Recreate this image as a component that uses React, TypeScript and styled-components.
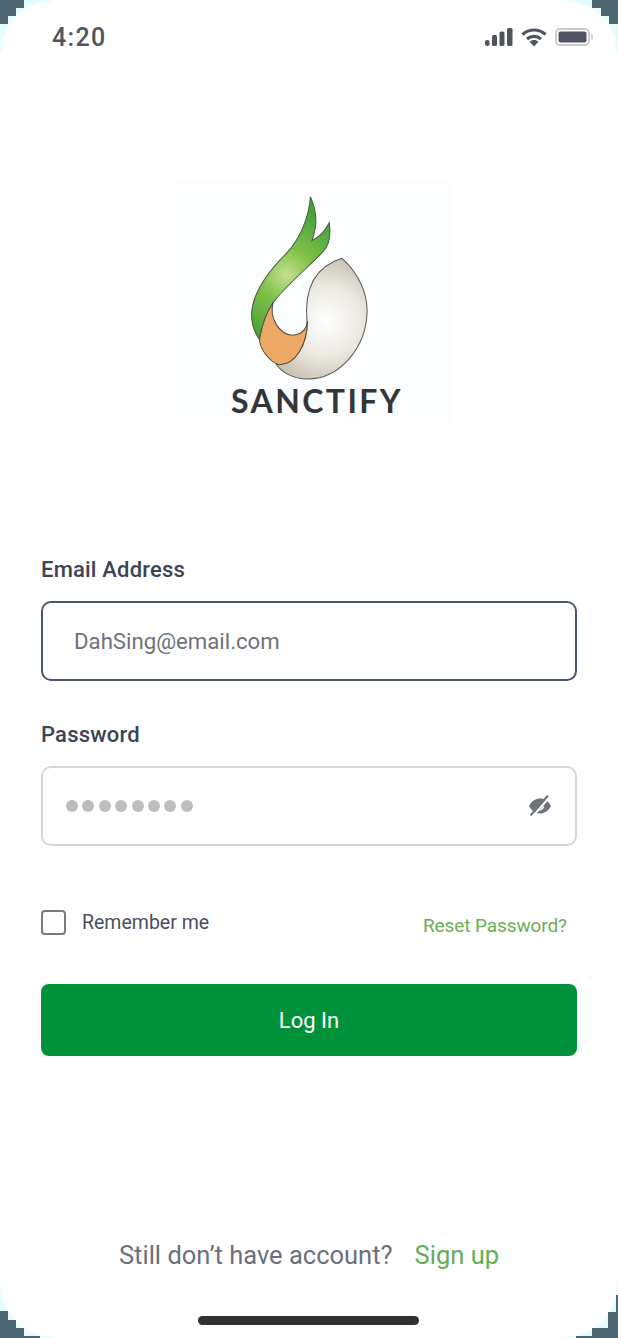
import React from 'react';
import styled, { createGlobalStyle } from 'styled-components';

const GlobalStyle = createGlobalStyle`
  html, body {
    margin: 0;
    padding: 0;
    background: #ffffff;
  }
  * {
    box-sizing: border-box;
  }
`;

export default function App() {
  return (
    <Screen>
      <GlobalStyle />
      <CornerMark $side="top-left" />
      <CornerMark $side="top-right" />
      <CornerMark $side="bottom-left" />
      <CornerMark $side="bottom-right" />

      <StatusBar>
        <Time>4:20</Time>
        <StatusIcons>
          <svg width="28" height="18" viewBox="0 0 28 18" fill="#4e5461">
            <rect x="0" y="12" width="4.5" height="6" rx="2" />
            <rect x="7" y="7" width="5" height="11" rx="1.5" />
            <rect x="14.5" y="3.5" width="5" height="14.5" rx="1.5" />
            <rect x="22" y="0" width="5.5" height="18" rx="1.5" />
          </svg>
          <svg width="26" height="19" viewBox="0 0 26 19" fill="none" stroke="#4e5461" strokeWidth="3.2">
            <path d="M1.5 6.5C8 0.5 18 0.5 24.5 6.5" />
            <path d="M6 11C10 7.5 16 7.5 20 11" />
            <path d="M8.5 13.5L13 18.5L17.5 13.5C15 11.4 11 11.4 8.5 13.5Z" fill="#4e5461" stroke="none" />
          </svg>
          <svg width="39" height="18" viewBox="0 0 39 18">
            <rect x="1" y="1" width="33" height="16" rx="4" fill="none" stroke="#c9cbcf" strokeWidth="2" />
            <rect x="3.5" y="3.5" width="28" height="11" rx="2" fill="#4e5461" />
            <rect x="36" y="6" width="2" height="6" rx="1" fill="#d3d5d8" />
          </svg>
        </StatusIcons>
      </StatusBar>

      <LogoPanel>
        <svg width="280" height="205" viewBox="0 0 832 610">
          <defs>
            <radialGradient id="leaf" gradientUnits="userSpaceOnUse" cx="352" cy="282" r="200">
              <stop offset="0" stopColor="#c4e08e" />
              <stop offset="0.4" stopColor="#80c04a" />
              <stop offset="1" stopColor="#45a238" />
            </radialGradient>
            <radialGradient id="egg" gradientUnits="userSpaceOnUse" cx="470" cy="420" r="190">
              <stop offset="0" stopColor="#ffffff" />
              <stop offset="0.55" stopColor="#ece9e1" />
              <stop offset="1" stopColor="#c8c2b3" />
            </radialGradient>
          </defs>
          <path
            d="M423 50C436 78 442 112 438 140C436 155 432 168 428 180C448 170 468 150 479 127C484 160 482 190 462 212C430 248 352 312 312 365C296 395 278 440 272 475C254 450 248 425 248 400C250 340 290 280 350 220C390 180 420 110 423 50Z"
            fill="url(#leaf)"
            stroke="#4a5a42"
            strokeWidth="3"
          />
          <path
            d="M517 233C570 280 592 340 592 390C590 500 510 592 415 592C370 592 335 570 322 548C380 550 415 490 413 420C405 330 430 260 517 233Z"
            fill="url(#egg)"
            stroke="#5d5a52"
            strokeWidth="3"
          />
          <path
            d="M312 365C300 410 330 460 370 462C400 460 412 440 415 420C412 490 380 550 330 550C300 540 270 500 272 472C280 425 295 390 312 365Z"
            fill="#eca964"
            stroke="#4f4a42"
            strokeWidth="3"
          />
        </svg>
        <LogoText>SANCTIFY</LogoText>
      </LogoPanel>

      <Form>
        <Field>
          <Label>Email Address</Label>
          <InputBox $active>
            <InputText>DahSing@email.com</InputText>
          </InputBox>
        </Field>

        <Field>
          <Label>Password</Label>
          <InputBox>
            <Dots>
              {Array.from({ length: 8 }).map((_, i) => (
                <Dot key={i} />
              ))}
            </Dots>
            <svg width="26" height="24" viewBox="0 0 26 24">
              <path
                d="M2 12C5 6.5 9 4.5 13 4.5C17 4.5 21 6.5 24 12C21 17.5 17 19.5 13 19.5C9 19.5 5 17.5 2 12Z"
                fill="#6f737b"
              />
              <path d="M10 15.5C12.5 16.5 15.5 15.5 16.8 12.5" fill="none" stroke="#fff" strokeWidth="1.6" />
              <path d="M5.5 22.5L23 2.5" stroke="#fff" strokeWidth="2" />
              <path d="M3.5 21.5L21 1.5" stroke="#6f737b" strokeWidth="2" />
            </svg>
          </InputBox>
        </Field>

        <OptionsRow>
          <Remember>
            <Checkbox />
            <RememberText>Remember me</RememberText>
          </Remember>
          <ResetLink>Reset Password?</ResetLink>
        </OptionsRow>

        <LoginButton>Log In</LoginButton>
      </Form>

      <Footer>
        <FooterText>Still don’t have account?</FooterText>
        <SignUp>Sign up</SignUp>
      </Footer>

      <HomeBar />
    </Screen>
  );
}

const fontStack = `Roboto, "Noto Sans", sans-serif`;

const Screen = styled.div`
  position: relative;
  width: 618px;
  height: 1338px;
  overflow: hidden;
  background: #ffffff;
  font-family: ${fontStack};
  display: flex;
  flex-direction: column;
`;

const step = (pos: string, w: number, h: number) =>
  `linear-gradient(#4d6670, #4d6670) ${pos} / ${w}px ${h}px no-repeat`;

const sliver = (at: string) =>
  `radial-gradient(circle 52px at ${at}, transparent 49px, #e6fcfd 52px, #dcfafc 60px)`;

const cornerSteps: Record<string, string> = {
  'top-left': [step('0 0', 24, 8), step('0 0', 16, 16), step('0 0', 8, 24), sliver('100% 100%')].join(', '),
  'top-right': [step('100% 0', 26, 8), step('100% 0', 17, 16), step('100% 0', 9, 24), sliver('0 100%')].join(', '),
  'bottom-left': [
    step('0 100%', 40, 2),
    step('0 100%', 24, 10),
    step('0 100%', 16, 18),
    step('0 100%', 8, 27),
    sliver('100% 0'),
  ].join(', '),
  'bottom-right': [
    step('100% 100%', 42, 2),
    step('100% 100%', 26, 10),
    step('100% 100%', 10, 26),
    step('100% 100%', 2, 43),
    sliver('0 0'),
  ].join(', '),
};

const CornerMark = styled.div<{ $side: string }>`
  position: absolute;
  width: 52px;
  height: 52px;
  ${(p) => (p.$side.startsWith('top') ? 'top: 0;' : 'bottom: 0;')}
  ${(p) => (p.$side.endsWith('left') ? 'left: 0;' : 'right: 0;')}
  background: ${(p) => cornerSteps[p.$side]};
`;

const StatusBar = styled.div`
  display: flex;
  align-items: center;
  justify-content: space-between;
  height: 18px;
  margin-top: 28px;
  padding: 0 24px 0 52px;
`;

const Time = styled.span`
  font-size: 25px;
  font-weight: 500;
  letter-spacing: 1.3px;
  color: #4f5561;
`;

const StatusIcons = styled.div`
  display: flex;
  align-items: center;
  gap: 8px;
`;

const LogoPanel = styled.div`
  display: flex;
  flex-direction: column;
  align-items: center;
  width: 275px;
  height: 250px;
  margin: 134px 0 0 175px;
  background: #fcfdfe;

  svg {
    margin-left: -9px;
  }
`;

const LogoText = styled.div`
  margin: -4px 0 0 9px;
  font-family: Lato, sans-serif;
  font-size: 32px;
  line-height: 40px;
  font-weight: 700;
  letter-spacing: 2.4px;
  color: #333638;
`;

const Form = styled.div`
  display: flex;
  flex-direction: column;
  margin-top: 127px;
  padding: 0 41px;
`;

const Field = styled.div`
  display: flex;
  flex-direction: column;
  gap: 18px;
  margin-bottom: 41px;
`;

const Label = styled.div`
  font-size: 22px;
  line-height: 26px;
  font-weight: 500;
  letter-spacing: 0.2px;
  color: #3a4554;
`;

const InputBox = styled.div<{ $active?: boolean }>`
  display: flex;
  align-items: center;
  justify-content: space-between;
  height: 80px;
  padding: 0 22px 0 ${(p) => (p.$active ? '31px' : '23px')};
  border: 2px solid ${(p) => (p.$active ? '#4a5768' : '#d3d8dc')};
  border-radius: 10px;
  background: #fff;
`;

const InputText = styled.span`
  font-size: 22.2px;
  color: #6d727b;
`;

const Dots = styled.div`
  display: flex;
  gap: 4.4px;
`;

const Dot = styled.span`
  width: 12px;
  height: 12px;
  border-radius: 50%;
  background: #bcbec2;
`;

const OptionsRow = styled.div`
  display: flex;
  align-items: flex-start;
  justify-content: space-between;
  margin-top: 23px;
  padding-right: 10px;
`;

const Remember = styled.div`
  display: flex;
  align-items: center;
  gap: 16px;
`;

const Checkbox = styled.span`
  width: 25px;
  height: 25px;
  border: 2px solid #777b84;
  border-radius: 4px;
`;

const RememberText = styled.span`
  font-size: 19.5px;
  color: #4a505c;
`;

const ResetLink = styled.span`
  margin-top: 4px;
  font-size: 19px;
  line-height: 24px;
  letter-spacing: -0.1px;
  color: #6cae58;
`;

const LoginButton = styled.button`
  display: block;
  width: 100%;
  height: 72px;
  margin-top: 46px;
  border: none;
  border-radius: 8px;
  background: #00923a;
  color: #ffffff;
  font-family: ${fontStack};
  font-size: 22px;
`;

const Footer = styled.div`
  display: flex;
  justify-content: center;
  align-items: baseline;
  gap: 22px;
  margin-top: 180px;
  font-size: 25.5px;
  line-height: 38px;
`;

const FooterText = styled.span`
  color: #6b7079;
`;

const SignUp = styled.span`
  color: #68ad52;
`;

const HomeBar = styled.div`
  width: 221px;
  height: 9px;
  margin: 42px 0 0 198px;
  border-radius: 5px;
  background: #2f3032;
`;
